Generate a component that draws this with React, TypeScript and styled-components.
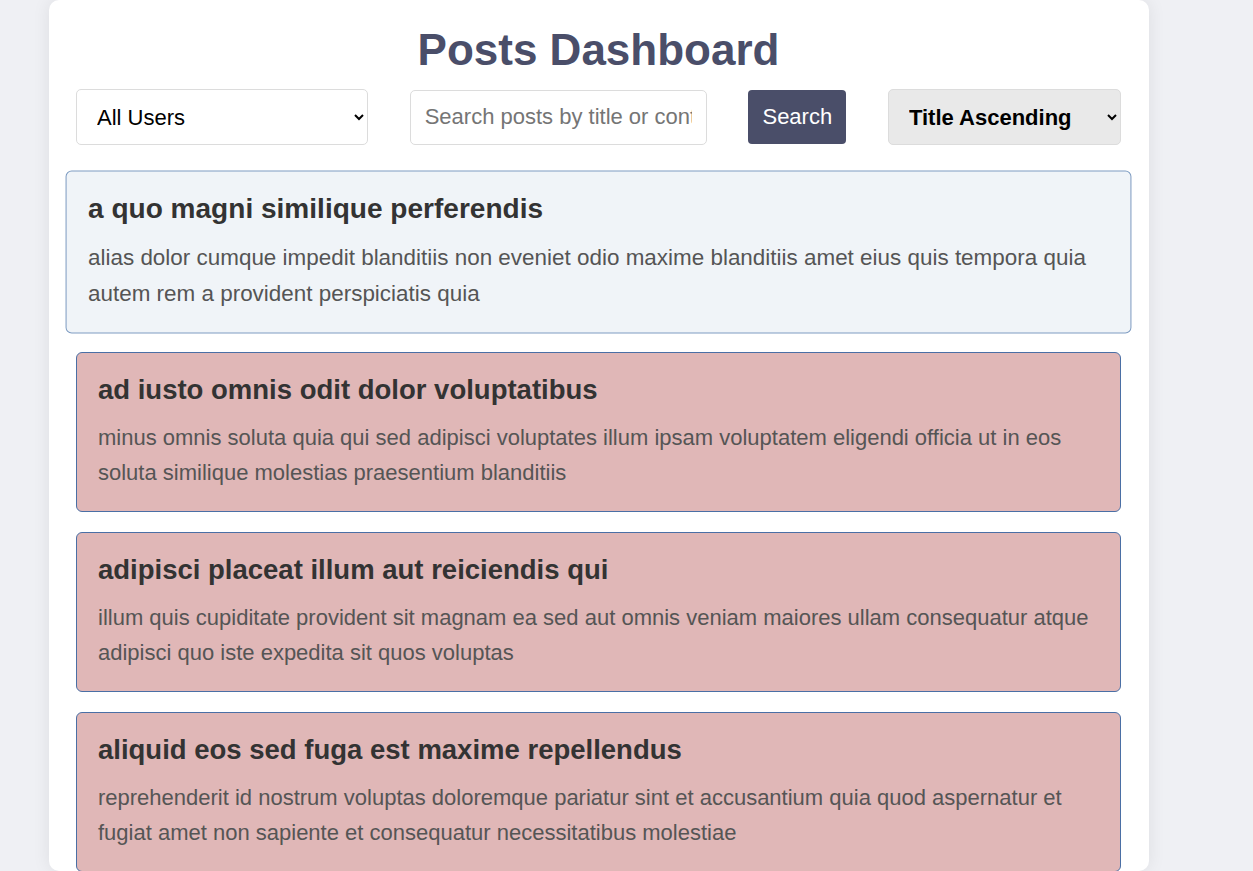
import React from "react";
import styled, { createGlobalStyle } from "styled-components";

const GlobalStyle = createGlobalStyle`
  html, body {
    margin: 0;
    padding: 0;
    background: #eff0f4;
    font-family: "Liberation Sans", Arial, sans-serif;
  }
  * { box-sizing: border-box; }
`;

const Page = styled.div`
  display: flex;
  padding-left: 49px;
  height: 871px;
  overflow: hidden;
`;

const Container = styled.div`
  width: 1100px;
  background: #ffffff;
  border-radius: 10px;
  box-shadow: 0 0 18px rgba(0, 0, 0, 0.08);
  padding: 22px 28px 40px 27px;
  display: flex;
  flex-direction: column;
`;

const Title = styled.h1`
  margin: 0;
  text-align: center;
  font-size: 44px;
  font-weight: 700;
  color: #4a4e69;
  line-height: 56px;
`;

const Filters = styled.div`
  display: flex;
  justify-content: space-between;
  align-items: center;
  margin-top: 11px;
  margin-bottom: 27px;
`;

const Select = styled.select<{ $width: number; $muted?: boolean }>`
  width: ${(p) => p.$width}px;
  height: 56px;
  padding: 0 8px 0 16px;
  font-family: "Liberation Sans", Arial, sans-serif;
  font-size: 22px;
  font-weight: ${(p) => (p.$muted ? 700 : 400)};
  color: #000;
  background: ${(p) => (p.$muted ? "#e9e9e9" : "#ffffff")};
  border: 1px solid #dcdcdc;
  border-radius: 5px;
`;

const SearchInput = styled.input`
  width: 297px;
  height: 55px;
  padding: 0 14px;
  font-family: "Liberation Sans", Arial, sans-serif;
  font-size: 22px;
  border: 1px solid #dcdcdc;
  border-radius: 5px;
  color: #333;
  &::placeholder { color: #757575; }
`;

const SearchButton = styled.button`
  width: 98px;
  height: 54px;
  padding: 0;
  border: none;
  border-radius: 4px;
  background: #4a4e69;
  color: #ffffff;
  font-family: "Liberation Sans", Arial, sans-serif;
  font-size: 22px;
`;

const List = styled.div`
  display: flex;
  flex-direction: column;
  gap: 20px;
`;

const Card = styled.div<{ $hover?: boolean }>`
  padding: 19px 21px 21px 21px;
  border-radius: 6px;
  border: 1px solid ${(p) => (p.$hover ? "#7e9cc2" : "#4a6fa5")};
  background: ${(p) => (p.$hover ? "#f0f4f8" : "#e0b7b7")};
  transform: ${(p) => (p.$hover ? "scale(1.02)" : "none")};
`;

const CardTitle = styled.h2`
  margin: 0 0 12px 0;
  font-size: 27.5px;
  line-height: 36px;
  font-weight: 700;
  color: #333333;
`;

const CardBody = styled.p`
  margin: 0;
  font-size: 22px;
  line-height: 35px;
  color: #555555;
`;

const posts = [
  {
    title: "a quo magni similique perferendis",
    body: "alias dolor cumque impedit blanditiis non eveniet odio maxime blanditiis amet eius quis tempora quia autem rem a provident perspiciatis quia",
  },
  {
    title: "ad iusto omnis odit dolor voluptatibus",
    body: "minus omnis soluta quia qui sed adipisci voluptates illum ipsam voluptatem eligendi officia ut in eos soluta similique molestias praesentium blanditiis",
  },
  {
    title: "adipisci placeat illum aut reiciendis qui",
    body: "illum quis cupiditate provident sit magnam ea sed aut omnis veniam maiores ullam consequatur atque adipisci quo iste expedita sit quos voluptas",
  },
  {
    title: "aliquid eos sed fuga est maxime repellendus",
    body: "reprehenderit id nostrum voluptas doloremque pariatur sint et accusantium quia quod aspernatur et fugiat amet non sapiente et consequatur necessitatibus molestiae",
  },
];

export default function App() {
  return (
    <>
      <GlobalStyle />
      <Page>
        <Container>
          <Title>Posts Dashboard</Title>
          <Filters>
            <Select $width={292} defaultValue="all">
              <option value="all">All Users</option>
            </Select>
            <SearchInput placeholder="Search posts by title or content" />
            <SearchButton>Search</SearchButton>
            <Select $width={233} $muted defaultValue="asc">
              <option value="asc">Title Ascending</option>
            </Select>
          </Filters>
          <List>
            {posts.map((p, i) => (
              <Card key={p.title} $hover={i === 0}>
                <CardTitle>{p.title}</CardTitle>
                <CardBody>{p.body}</CardBody>
              </Card>
            ))}
          </List>
        </Container>
      </Page>
    </>
  );
}
